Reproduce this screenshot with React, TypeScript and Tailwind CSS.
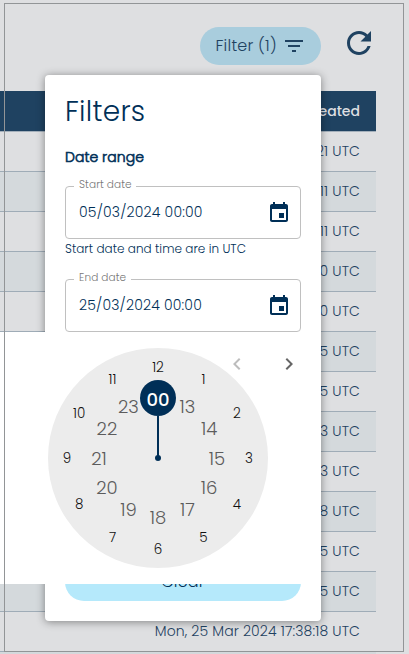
import React from "react";

const rows = [
  "Mon, 25 Mar 2024 17:40:21 UTC",
  "Mon, 25 Mar 2024 17:40:11 UTC",
  "Mon, 25 Mar 2024 17:40:11 UTC",
  "Mon, 25 Mar 2024 17:40:10 UTC",
  "Mon, 25 Mar 2024 17:40:10 UTC",
  "Mon, 25 Mar 2024 17:39:55 UTC",
  "Mon, 25 Mar 2024 17:39:55 UTC",
  "Mon, 25 Mar 2024 17:39:53 UTC",
  "Mon, 25 Mar 2024 17:39:53 UTC",
  "Mon, 25 Mar 2024 17:38:48 UTC",
  "Mon, 25 Mar 2024 17:38:45 UTC",
  "Mon, 25 Mar 2024 17:38:35 UTC",
  "Mon, 25 Mar 2024 17:38:18 UTC",
  "",
];

const outerHours = ["12", "1", "2", "3", "4", "5", "6", "7", "8", "9", "10", "11"];
const innerHours = ["00", "13", "14", "15", "16", "17", "18", "19", "20", "21", "22", "23"];

function CalendarIcon() {
  return (
    <svg width="24" height="24" viewBox="0 0 24 24" fill="#002f57">
      <path d="M17 12h-5v5h5v-5zM16 1v2H8V1H6v2H5c-1.11 0-1.99.9-1.99 2L3 19c0 1.100.89 2 2 2h14c1.100 0 2-.9 2-2V5c0-1.100-.9-2-2-2h-1V1h-2zm3 18H5V8h14v11z" />
    </svg>
  );
}

function DateField({ label, value, legend }: { label: string; value: string; legend: string }) {
  return (
    <div className="relative flex h-[53px] shrink-0 items-center justify-between rounded-[4px] border border-[#c0c0c0] pl-[13px] pr-[9px]">
      <span className={`absolute -top-[10px] left-[8px] h-4 bg-white pl-[5px] text-[10.5px] leading-4 tracking-[0.1px] text-[#777777] ${legend}`}>{label}</span>
      <span className="text-[14px] tracking-[0.19px] text-[#002f57]">{value}</span>
      <CalendarIcon />
    </div>
  );
}

function Clock() {
  return (
    <svg width="220" height="220" viewBox="0 0 220 220" textAnchor="middle" className="shrink-0">
      <circle cx="110" cy="110" r="110" fill="#ececec" />
      <path d="M110 110V68" stroke="#002f57" strokeWidth="2" />
      <circle cx="110" cy="110" r="3" fill="#002f57" />
      <circle cx="110" cy="50" r="18" fill="#002f57" />
      {outerHours.map((h, i) => {
        const a = (i * Math.PI) / 6;
        return (
          <text key={h} x={110 + 91 * Math.sin(a)} y={115 - 91 * Math.cos(a)} fontSize="13.5" fill="#111111">
            {h}
          </text>
        );
      })}
      {innerHours.map((h, i) => {
        const a = (i * Math.PI) / 6;
        return (
          <text
            key={h}
            x={110 + 59 * Math.sin(a)}
            y={116.5 - 59 * Math.cos(a)}
            fontSize="18"
            fontWeight={i === 0 ? 500 : 300}
            fill={i === 0 ? "#ffffff" : "#5c5c5c"}
          >
            {h}
          </text>
        );
      })}
    </svg>
  );
}

export default function App() {
  return (
    <div className="relative h-[654px] w-[409px] overflow-hidden bg-[#dedfe1] font-['Poppins','Inter',sans-serif] font-light">
      <header className="flex h-[91px] items-start justify-end pr-[32px] pt-[25px]">
        <div className="mt-[2px] flex h-[38px] w-[121px] items-center justify-between rounded-full bg-[#a9cddd] pl-[15.5px] pr-[15px] text-[#1f4261]">
          <span className="whitespace-nowrap text-[16px] tracking-[0.22px]">Filter (1)</span>
          <svg width="24" height="24" viewBox="0 0 24 24" fill="#1f4261">
            <path d="M10 18h4v-2h-4v2zM3 6v2h18V6H3zm3 7h12v-2H6v2z" />
          </svg>
        </div>
        <svg width="36" height="36" viewBox="0 0 24 24" className="ml-[20px]" fill="#1f4261">
          <path d="M17.650 6.350C16.200 4.900 14.210 4 12 4c-4.420 0-7.990 3.580-7.990 8s3.570 8 7.990 8c3.730 0 6.840-2.550 7.730-6h-2.080c-.820 2.330-3.040 4-5.650 4-3.310 0-6-2.690-6-6s2.690-6 6-6c1.660 0 3.140.690 4.220 1.780L13 11h7V4l-2.350 2.350z" />
        </svg>
      </header>

      <div className="w-[376px] text-[#1f4261]">
        <div className="flex h-[41px] items-center justify-end border-b border-[#a4b0bb] bg-[#1f4261] pr-4 text-[14px] font-medium text-[#dedfe1]">
          Created
        </div>
        {rows.map((r, i) => (
          <div
            key={i}
            className={`flex h-[40px] items-center justify-end border-b border-[#9facb7] pr-4 text-[14px] tracking-[0.14px] ${i % 2 ? "bg-[#d4d9dc]" : "bg-[#dedfe1]"}`}
          >
            {r}
          </div>
        ))}
      </div>

      <section className="absolute left-[45px] top-[75px] flex h-[546px] w-[276px] flex-col rounded-[4px] bg-white px-5 text-[#002f57] shadow-[0_1px_9px_rgba(0,0,0,0.42)]">
        <h1 className="mt-[16px] h-[42px] text-[28px] leading-[42px] tracking-[0.28px]">Filters</h1>
        <h2 className="mb-[18px] mt-[14px] h-[21px] text-[14px] font-light leading-[21px] tracking-[0.05px] [-webkit-text-stroke:0.6px_#002f57]">Date range</h2>
        <DateField label="Start date" value="05/03/2024 00:00" legend="w-[62px]" />
        <p className="h-[40px] pt-[1px] text-[12px] leading-[18px] tracking-[0.04px]">Start date and time are in UTC</p>
        <DateField label="End date" value="25/03/2024 00:00" legend="w-[57px]" />
        <button className="mt-auto mb-5 h-[38px] shrink-0 rounded-full bg-[#b5e9fb] text-[16px] tracking-[0.15px]">Clear</button>
      </section>

      <div className="absolute left-0 top-[332px] flex h-[252px] w-[316px] items-start bg-white pl-[48px] pt-[16px]">
        <Clock />
        <div className="absolute right-[15px] top-[20px] flex gap-[28px]">
          <svg width="24" height="24" viewBox="0 0 24 24" fill="#bdbdbd">
            <path d="M15.410 7.410 14 6l-6 6 6 6 1.410-1.410L10.830 12z" />
          </svg>
          <svg width="24" height="24" viewBox="0 0 24 24" fill="#666666">
            <path d="M10 6 8.590 7.410 13.170 12l-4.580 4.590L10 18l6-6z" />
          </svg>
        </div>
      </div>

      <div className="pointer-events-none absolute left-[4px] top-[3px] h-[649px] w-[400px] border border-[#929597]" />
    </div>
  );
}
